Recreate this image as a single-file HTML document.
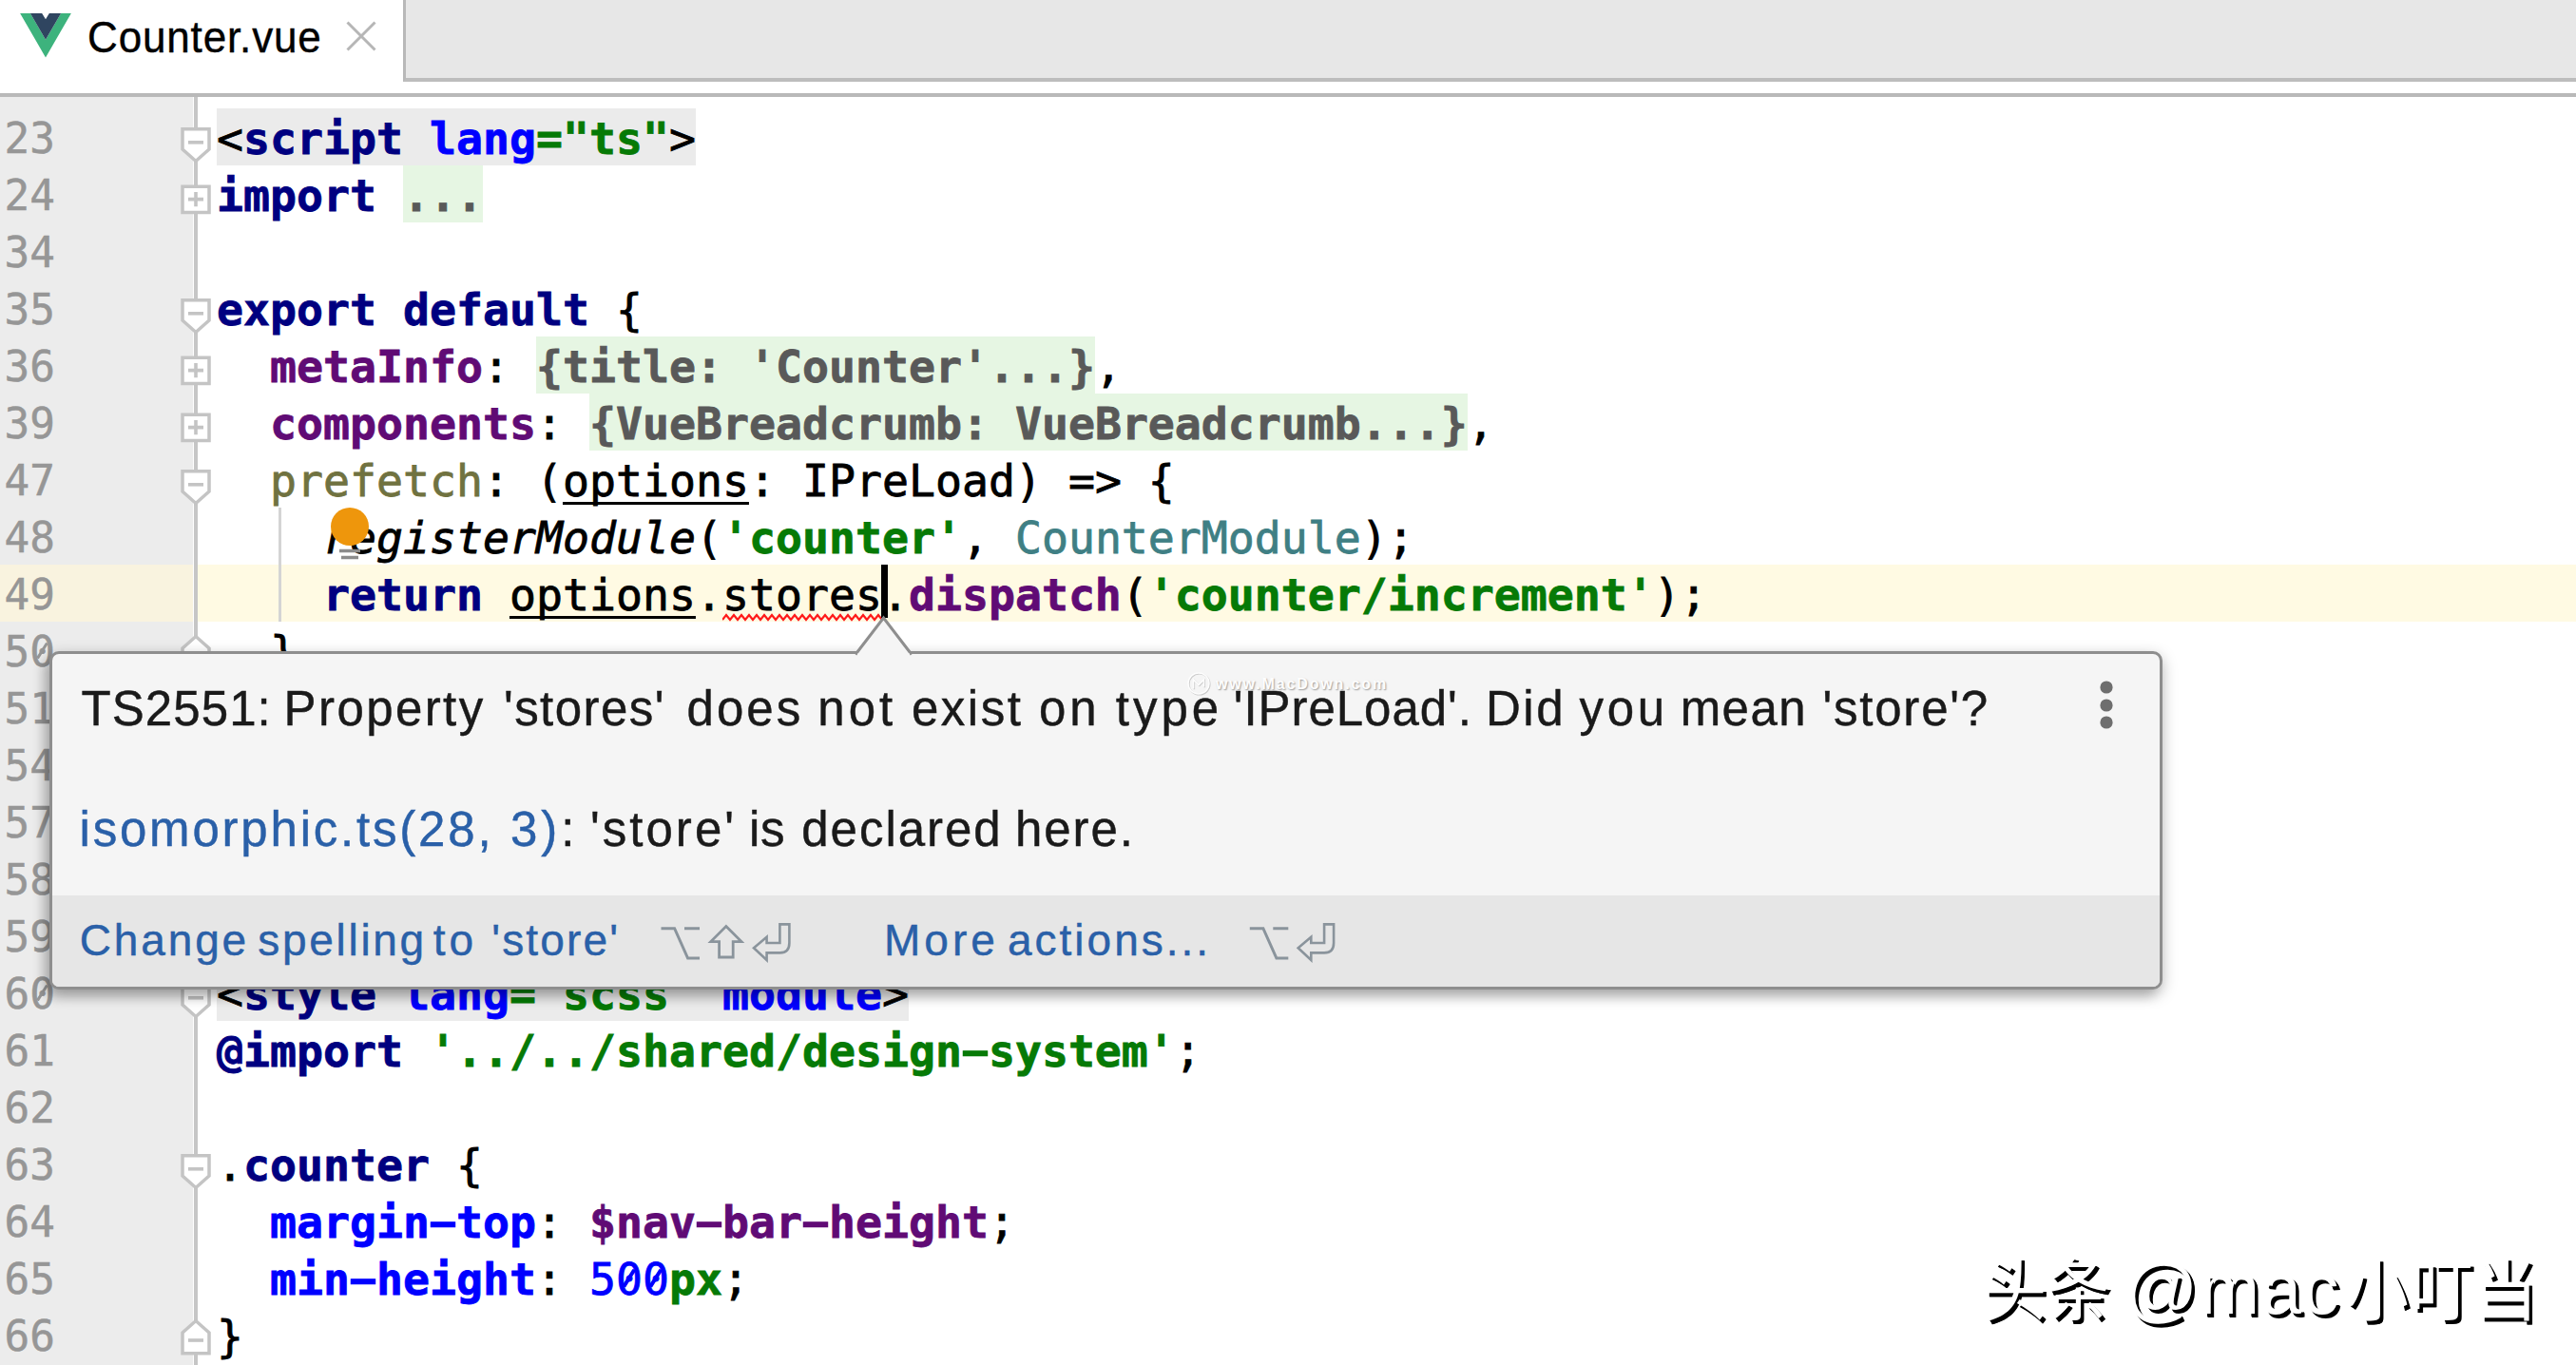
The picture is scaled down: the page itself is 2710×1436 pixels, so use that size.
<!DOCTYPE html>
<html lang="en">
<head>
<meta charset="utf-8">
<title>Counter.vue</title>
<style>
*{box-sizing:border-box;margin:0;padding:0}
html,body{width:2710px;height:1436px;overflow:hidden;background:#fff}
body{position:relative;font-family:"Liberation Sans",sans-serif}
.abs{position:absolute}
/* tab bar */
#tabbg{position:absolute;left:424px;top:0;width:2286px;height:86px;background:#e7e7e7;border-left:3.6px solid #b8b8b8;border-bottom:4px solid #bdbdbd}
#tabtxt{position:absolute;left:92px;top:15px;font-size:44px;line-height:50px;color:#000;white-space:pre;letter-spacing:.85px;-webkit-text-stroke:.4px #000;transform:scaleY(1.05);transform-origin:0 40px}
#hline{position:absolute;left:0;top:98px;width:2710px;height:4px;background:#b9b9b9}
/* gutter */
#gutter{position:absolute;left:0;top:102px;width:203px;height:1334px;background:#ececec}
#foldline{position:absolute;left:204px;top:102px;width:4px;height:1334px;background:#c6c6c6}
#caretrow{position:absolute;left:208px;top:594px;width:2502px;height:60px;background:#fffae3}
#caretgut{position:absolute;left:0;top:594px;width:203px;height:60px;background:#f9f3df}
.ln{position:absolute;left:4.5px;height:60px;font:44.3px/64px "DejaVu Sans Mono","Liberation Mono",monospace;color:#969696;white-space:pre;-webkit-text-stroke:.5px #969696}
.cl{position:absolute;left:228px;height:60px;font:46.5px/64px "DejaVu Sans Mono","Liberation Mono",monospace;color:#000;white-space:pre;-webkit-text-stroke-width:.8px}
.cl span{display:inline-block;height:60px;vertical-align:top}
.k{color:#000080;font-weight:bold}
.a{color:#0000ff;font-weight:bold}
.s{color:#067a06;font-weight:bold}
.p{color:#600b75;font-weight:bold}
.f{color:#595959;font-weight:bold;background:#e6f6e3}
.tagbg{background:#ebebeb}
.fn{color:#707240}
.ty{color:#3f7f84}
.it{font-style:italic}
.u{text-decoration:underline;text-decoration-thickness:3.4px;text-underline-offset:6px;text-decoration-skip-ink:none}
.h{display:inline-block;transform:scale(1.75,.8);height:auto!important}
.n{color:#0000ff}
.z{position:absolute;width:3.2px;height:19px;background:#969696;transform:rotate(32deg);border-radius:1px}
.fm{position:absolute;left:190px;width:32px;height:40px;overflow:visible}
#guide{position:absolute;left:293px;top:534px;width:3px;height:120px;background:#d4d4d4}
#caret{position:absolute;left:927px;top:594px;width:6.5px;height:56px;background:#000}
/* popup */
#popup{position:absolute;left:52px;top:685px;width:2223px;height:356px;background:#f5f5f5;border:3px solid #8e8e8e;border-radius:10px;box-shadow:0 5px 16px rgba(0,0,0,.27),-7px 8px 12px rgba(0,0,0,.15)}
#pfoot{position:absolute;left:0;top:254px;width:2217px;height:96px;background:#e6e6e6;border-radius:0 0 7px 7px}
.pl{position:absolute;left:0;width:2300px;height:60px;line-height:60px;color:#1a1a1a;white-space:pre}
.w{position:absolute;top:0;white-space:pre;-webkit-text-stroke-width:.45px}
.lk{color:#2a60a8}
.sc{color:#8a8f94}
#wm{position:absolute;left:0;top:1300px;width:2710px;height:120px;color:#fff;text-shadow:3px 3px 0 #000,3.6px 3.6px 0 #000;white-space:pre}
#wm span{position:absolute;white-space:pre;line-height:100px}
#wm2{position:absolute;left:1279px;top:707.5px;font:bold 16px/24px "Liberation Sans",sans-serif;letter-spacing:1.85px;color:#fff;text-shadow:1px 1px 1.5px rgba(0,0,0,.42);white-space:pre;opacity:.85}
</style>
</head>
<body>
<!-- tab bar -->
<div id="tabbg"></div>
<svg class="abs" style="left:20.7px;top:14px" width="54" height="47" viewBox="0 0 56 49"><path d="M0 0 L28 48.5 L56 0 L44.8 0 L28 29 L11.2 0 Z" fill="#3db37d"/><path d="M11.2 0 L28 29 L44.8 0 L32 0 L28 6.5 L24 0 Z" fill="#2f4560"/></svg>
<div id="tabtxt">Counter.vue</div>
<svg class="abs" style="left:363.5px;top:21.5px" width="32" height="32" viewBox="0 0 32 32"><path d="M1.5 1.5 L30.5 30.5 M30.5 1.5 L1.5 30.5" stroke="#b6b6b6" stroke-width="3" fill="none"/></svg>
<div id="hline"></div>

<!-- gutter -->
<div id="gutter"></div>
<div id="caretgut"></div>
<div id="caretrow"></div>
<div id="foldline"></div>
<div id="guide"></div>

<!-- line numbers -->
<div class="ln" style="top:114px">23</div>
<div class="ln" style="top:174px">24</div>
<div class="ln" style="top:234px">34</div>
<div class="ln" style="top:294px">35</div>
<div class="ln" style="top:354px">36</div>
<div class="ln" style="top:414px">39</div>
<div class="ln" style="top:474px">47</div>
<div class="ln" style="top:534px">48</div>
<div class="ln" style="top:594px">49</div>
<div class="ln" style="top:654px">50</div>
<div class="ln" style="top:714px">51</div>
<div class="ln" style="top:774px">54</div>
<div class="ln" style="top:834px">57</div>
<div class="ln" style="top:894px">58</div>
<div class="ln" style="top:954px">59</div>
<div class="ln" style="top:1014px">60</div>
<div class="ln" style="top:1074px">61</div>
<div class="ln" style="top:1134px">62</div>
<div class="ln" style="top:1194px">63</div>
<div class="ln" style="top:1254px">64</div>
<div class="ln" style="top:1314px">65</div>
<div class="ln" style="top:1374px">66</div>

<!-- code -->
<div class="cl" style="top:114px"><span class="tagbg">&lt;<span class="k">script</span> <span class="a">lang</span><span class="s">="ts"</span>&gt;</span></div>
<div class="cl" style="top:174px"><span class="k">import</span> <span class="f">...</span></div>
<div class="cl" style="top:294px"><span class="k">export</span> <span class="k">default</span> {</div>
<div class="cl" style="top:354px">  <span class="p">metaInfo</span>: <span class="f">{title: 'Counter'...}</span>,</div>
<div class="cl" style="top:414px">  <span class="p">components</span>: <span class="f">{VueBreadcrumb: VueBreadcrumb...}</span>,</div>
<div class="cl" style="top:474px">  <span class="fn">prefetch</span>: (<span class="u">options</span>: IPreLoad) =&gt; {</div>
<div class="cl" style="top:534px">    <span class="it">registerModule</span>(<span class="s">'counter'</span>, <span class="ty">CounterModule</span>);</div>
<div class="cl" style="top:594px">    <span class="k">return</span> <span class="u">options</span>.stores.<span class="p">dispatch</span>(<span class="s">'counter/increment'</span>);</div>
<div class="cl" style="top:654px">  },</div>
<div class="cl" style="top:1014px"><span class="tagbg">&lt;<span class="k">style</span> <span class="a">lang</span><span class="s">="scss"</span> <span class="a">module</span>&gt;</span></div>
<div class="cl" style="top:1074px"><span class="k">@import</span> <span class="s">'../../shared/design<span class="h">-</span>system'</span>;</div>
<div class="cl" style="top:1194px">.<span class="k">counter</span> {</div>
<div class="cl" style="top:1254px">  <span class="a">margin<span class="h">-</span>top</span>: <span class="p">$nav<span class="h">-</span>bar<span class="h">-</span>height</span>;</div>
<div class="cl" style="top:1314px">  <span class="a">min<span class="h">-</span>height</span>: <span class="n">500</span><span class="s">px</span>;</div>
<div class="cl" style="top:1374px">}</div>

<!-- slashed zeros -->
<div class="z" style="left:43.4px;top:674.6px"></div>
<div class="z" style="left:43.4px;top:1034.6px"></div>
<div class="z" style="left:660.2px;top:1334px;height:20.5px;width:3.6px;background:#0000ff"></div>
<div class="z" style="left:688.2px;top:1334px;height:20.5px;width:3.6px;background:#0000ff"></div>
<!-- squiggle + caret -->
<svg class="abs" style="left:760px;top:644px" width="168" height="12" viewBox="0 0 168 12"><path d="M0 8 L4 3 L8 8 L12 3 L16 8 L20 3 L24 8 L28 3 L32 8 L36 3 L40 8 L44 3 L48 8 L52 3 L56 8 L60 3 L64 8 L68 3 L72 8 L76 3 L80 8 L84 3 L88 8 L92 3 L96 8 L100 3 L104 8 L108 3 L112 8 L116 3 L120 8 L124 3 L128 8 L132 3 L136 8 L140 3 L144 8 L148 3 L152 8 L156 3 L160 8 L164 3 L168 8" stroke="#ff1a1a" stroke-width="2.2" fill="none"/></svg>
<div id="caret"></div>

<!-- fold markers -->
<svg class="fm" style="top:132px" viewBox="0 0 32 40"><path d="M2 3.8 H30 V25 L16 37.5 L2 25 Z" fill="#fff" stroke="#c4c4c4" stroke-width="3.5"/><path d="M8 17.8 H24" stroke="#c4c4c4" stroke-width="3.6"/></svg>
<svg class="fm" style="top:312px" viewBox="0 0 32 40"><path d="M2 3.8 H30 V25 L16 37.5 L2 25 Z" fill="#fff" stroke="#c4c4c4" stroke-width="3.5"/><path d="M8 17.8 H24" stroke="#c4c4c4" stroke-width="3.6"/></svg>
<svg class="fm" style="top:492px" viewBox="0 0 32 40"><path d="M2 3.8 H30 V25 L16 37.5 L2 25 Z" fill="#fff" stroke="#c4c4c4" stroke-width="3.5"/><path d="M8 17.8 H24" stroke="#c4c4c4" stroke-width="3.6"/></svg>
<svg class="fm" style="top:1032px" viewBox="0 0 32 40"><path d="M2 3.8 H30 V25 L16 37.5 L2 25 Z" fill="#fff" stroke="#c4c4c4" stroke-width="3.5"/><path d="M8 17.8 H24" stroke="#c4c4c4" stroke-width="3.6"/></svg>
<svg class="fm" style="top:1212px" viewBox="0 0 32 40"><path d="M2 3.8 H30 V25 L16 37.5 L2 25 Z" fill="#fff" stroke="#c4c4c4" stroke-width="3.5"/><path d="M8 17.8 H24" stroke="#c4c4c4" stroke-width="3.6"/></svg>
<svg class="fm" style="top:192px" viewBox="0 0 32 40"><path d="M2 4.2 H30 V31.6 H2 Z" fill="#fff" stroke="#c4c4c4" stroke-width="3.5"/><path d="M8 17.6 H24 M16 10 V25.2" stroke="#c4c4c4" stroke-width="3.6"/></svg>
<svg class="fm" style="top:372px" viewBox="0 0 32 40"><path d="M2 4.2 H30 V31.6 H2 Z" fill="#fff" stroke="#c4c4c4" stroke-width="3.5"/><path d="M8 17.6 H24 M16 10 V25.2" stroke="#c4c4c4" stroke-width="3.6"/></svg>
<svg class="fm" style="top:432px" viewBox="0 0 32 40"><path d="M2 4.2 H30 V31.6 H2 Z" fill="#fff" stroke="#c4c4c4" stroke-width="3.5"/><path d="M8 17.6 H24 M16 10 V25.2" stroke="#c4c4c4" stroke-width="3.6"/></svg>
<svg class="fm" style="top:666px" viewBox="0 0 32 40"><path d="M2 37.7 H30 V16 L16 3.5 L2 16 Z" fill="#fff" stroke="#c4c4c4" stroke-width="3.5"/><path d="M8 24 H24" stroke="#c4c4c4" stroke-width="3.6"/></svg>
<svg class="fm" style="top:1386px" viewBox="0 0 32 40"><path d="M2 37.7 H30 V16 L16 3.5 L2 16 Z" fill="#fff" stroke="#c4c4c4" stroke-width="3.5"/><path d="M8 24 H24" stroke="#c4c4c4" stroke-width="3.6"/></svg>

<!-- bulb -->
<svg class="abs" style="left:346px;top:532px" width="44" height="60" viewBox="0 0 44 60"><circle cx="22" cy="22" r="20" fill="#ee960c"/><path d="M11 47.5 H33 M13 54.5 H31" stroke="#8c8c8c" stroke-width="3.4" fill="none"/></svg>

<!-- popup -->
<div id="popup">
  <div id="pfoot"></div>
  <svg class="abs" style="left:2150.5px;top:27px" width="20" height="56" viewBox="0 0 20 56"><circle cx="10" cy="8" r="6.6" fill="#6e6e6e"/><circle cx="10" cy="27" r="6.6" fill="#6e6e6e"/><circle cx="10" cy="45" r="6.6" fill="#6e6e6e"/></svg>
</div>
<div class="pl" style="top:715.5px;font-size:51px"><span class="w" style="left:85.5px;letter-spacing:1.08px">TS2551:</span> <span class="w" style="left:298.6px;letter-spacing:2.40px">Property</span> <span class="w" style="left:530.0px;letter-spacing:1.43px">'stores'</span> <span class="w" style="left:722.5px;letter-spacing:3.07px">does</span> <span class="w" style="left:860.3px;letter-spacing:4.00px">not</span> <span class="w" style="left:959.0px;letter-spacing:2.50px">exist</span> <span class="w" style="left:1093.0px;letter-spacing:4.00px">on</span> <span class="w" style="left:1173.8px;letter-spacing:4.00px">type</span> <span class="w" style="left:1297.7px;letter-spacing:0.96px">'IPreLoad'.</span> <span class="w" style="left:1563.0px;letter-spacing:2.50px">Did</span> <span class="w" style="left:1661.5px;letter-spacing:3.75px">you</span> <span class="w" style="left:1767.7px;letter-spacing:1.43px">mean</span> <span class="w" style="left:1917.4px;letter-spacing:1.80px">'store'?</span></div>
<div class="pl" style="top:842.8px;font-size:51px"><span class="w lk" style="left:83.5px;letter-spacing:2.8px">isomorphic.ts(28,</span> <span class="w" style="left:537.0px;letter-spacing:4.00px"><span class="lk">3)</span>:</span> <span class="w" style="left:620.9px;letter-spacing:3.05px">'store'</span> <span class="w" style="left:788.0px;letter-spacing:0.60px">is</span> <span class="w" style="left:843.3px;letter-spacing:1.96px">declared</span> <span class="w" style="left:1067.9px;letter-spacing:1.95px">here.</span></div>
<div class="pl" style="top:958.6px;font-size:46px"><span class="w lk" style="left:83.8px;letter-spacing:2.84px">Change</span> <span class="w lk" style="left:271.3px;letter-spacing:2.70px">spelling</span> <span class="w lk" style="left:455.8px;letter-spacing:4.00px">to</span> <span class="w lk" style="left:517.2px;letter-spacing:2.18px">'store'</span> <span class="w lk" style="left:930.0px;letter-spacing:4.00px">More</span> <span class="w lk" style="left:1060.0px;letter-spacing:3.00px">actions...</span></div>
<!-- shortcut icons -->
<svg class="abs" style="left:690px;top:965px" width="150" height="54" viewBox="690 965 150 54" fill="none" stroke="#8a949c" stroke-width="3" stroke-linejoin="miter">
<path d="M695.5 976.7 H709.6 L723.6 1008 H736 M720 976.7 H736"/>
<path d="M763.9 974.4 L747.8 990.6 H756.6 V1007 H771.2 V990.6 H780 Z" stroke-width="2.8"/>
<path d="M806.6 985.8 L793 997.2 L806.6 1010 V1002.4 H820.5 Q830.4 1002.4 830.4 992 V972.4 H820.4 V992 H806.6 Z" stroke-width="2.6"/>
</svg>
<svg class="abs" style="left:1310px;top:965px" width="110" height="54" viewBox="1310 965 110 54" fill="none" stroke="#8a949c" stroke-width="3" stroke-linejoin="miter">
<path d="M1314.8 976.7 H1328.9 L1342.9 1008 H1355.3 M1339.3 976.7 H1355.3"/>
<path d="M1379.3 985.8 L1365.7 997.2 L1379.3 1010 V1002.4 H1393.2 Q1403.1 1002.4 1403.1 992 V972.4 H1393.1 V992 H1379.3 Z" stroke-width="2.6"/>
</svg>
<!-- popup arrow -->
<svg class="abs" style="left:896px;top:646px" width="68" height="46" viewBox="0 0 68 46"><path d="M4 42.5 L33.5 4 L63 42.5" fill="#f5f5f5" stroke="#8e8e8e" stroke-width="3"/><path d="M6 44 H61" stroke="#f5f5f5" stroke-width="5"/></svg>

<svg class="abs" style="left:1247px;top:705px;opacity:.8" width="28" height="28" viewBox="0 0 28 28" fill="none"><g stroke="rgba(0,0,0,.22)" stroke-width="1.6" transform="translate(.8 .8)"><circle cx="14" cy="14" r="11"/><path d="M8.5 19.5 V10 L14 15.5 L19.5 10 V17.5"/></g><g stroke="#fff" stroke-width="1.6"><circle cx="14" cy="14" r="11"/><path d="M8.5 19.5 V10 L14 15.5 L19.5 10 V17.5"/></g></svg>
<div id="wm2">www.MacDown.com</div>
<div id="wm"><span style="left:2086px;top:2px;font-size:67px;transform:scaleY(1.08);font-family:'Noto Sans CJK SC',sans-serif">头条</span> <span style="left:2235px;top:6px;font-size:76px;letter-spacing:1.6px;font-family:'Liberation Sans',sans-serif">@mac</span><span style="left:2468px;top:2px;font-size:66px;letter-spacing:1.6px;transform:scaleY(1.08);font-family:'Noto Sans CJK SC',sans-serif">小叮当</span></div>
</body>
</html>
